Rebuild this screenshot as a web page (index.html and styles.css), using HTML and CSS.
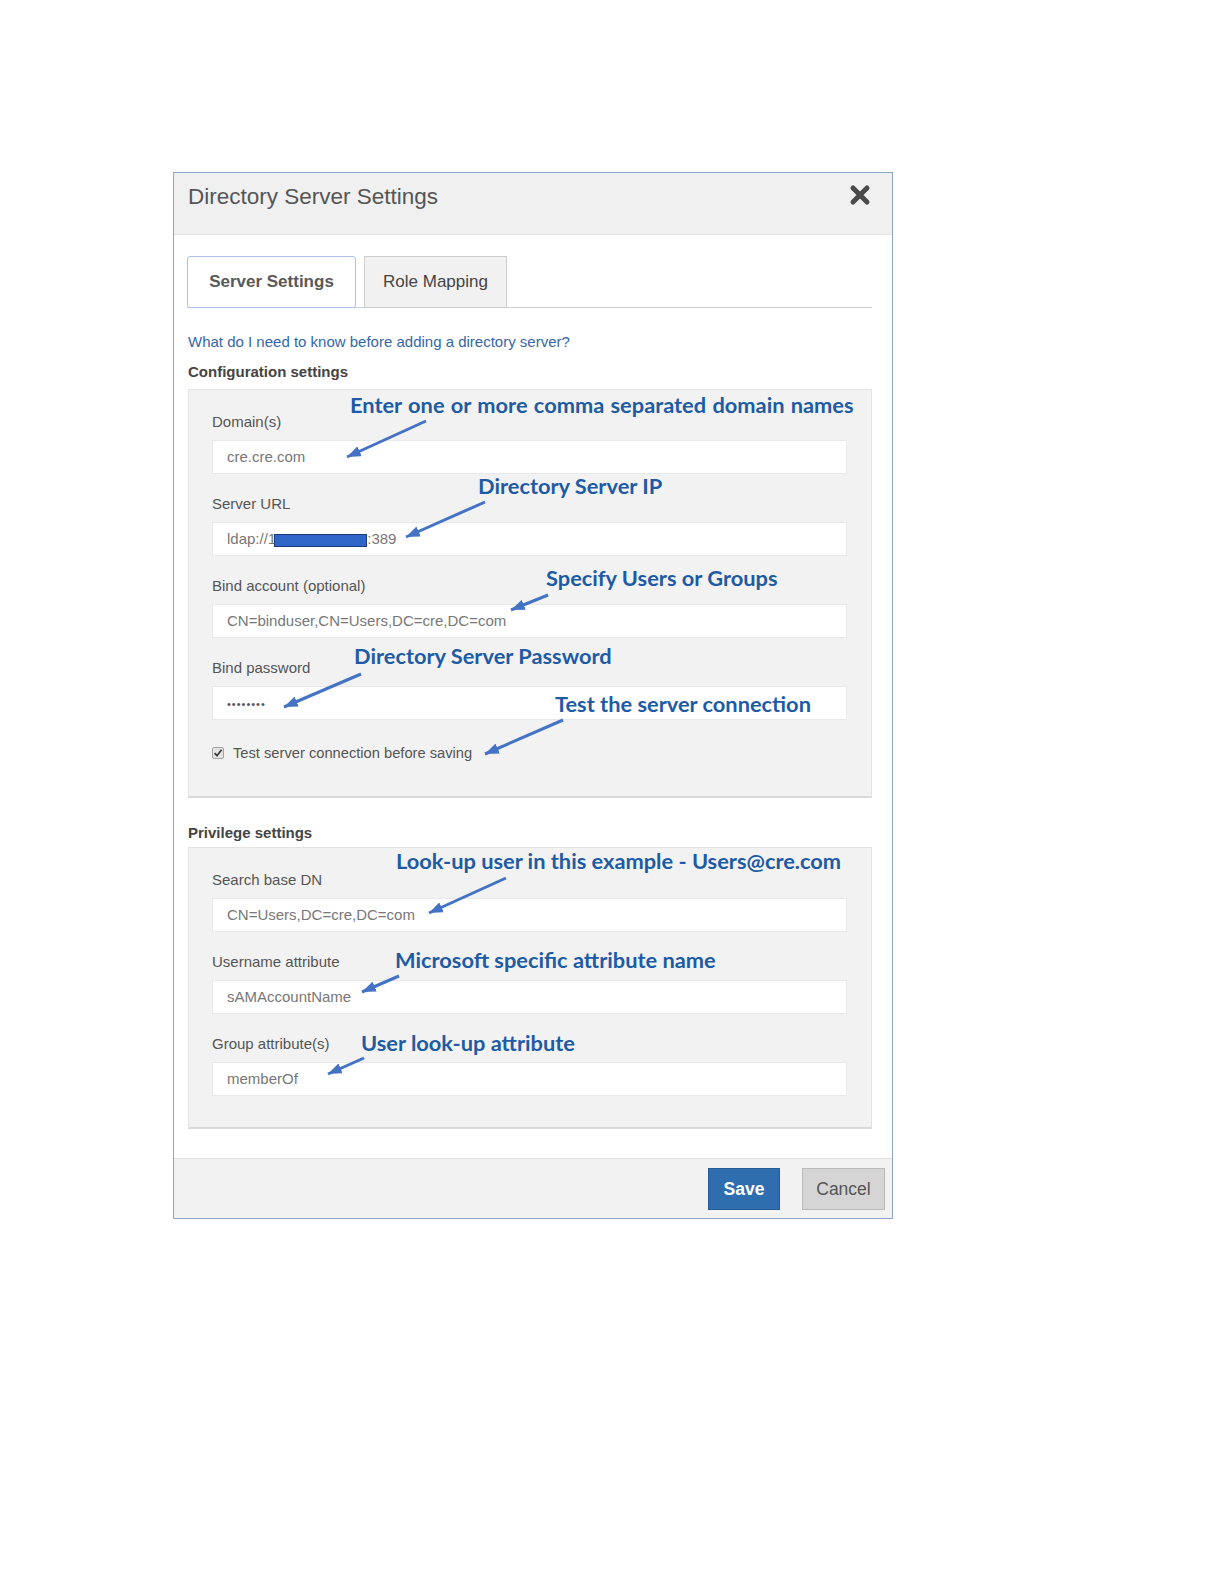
FILE: index.html
```html
<!DOCTYPE html>
<html>
<head>
	<meta charset="utf-8">
	<title>Directory Server Settings</title>
	<link rel="stylesheet" href="styles.css">
</head>
<body>
	<div id="page">
		<div class="dialog">
			<div class="dialog-header">
				<h1 class="dialog-title">Directory Server Settings</h1>
				<span class="close">
					<svg width="24" height="22" viewBox="0 0 24 22"><path d="M5 4 L19 18 M19 4 L5 18" stroke="#4a4a4a" stroke-width="5" stroke-linecap="round"/></svg>
				</span>
			</div>

			<div class="dialog-body">
				<ul class="tabs">
					<li class="tab active">Server Settings</li>
					<li class="tab">Role Mapping</li>
				</ul>

				<a class="help-link" href="#">What do I need to know before adding a directory server?</a>

				<p class="section-title">Configuration settings</p>
				<div class="panel">
					<div class="field">
						<label>Domain(s)</label>
						<div class="input">cre.cre.com</div>
					</div>
					<div class="field">
						<label>Server URL</label>
						<div class="input">ldap://1<span class="redacted"></span>:389</div>
					</div>
					<div class="field">
						<label>Bind account (optional)</label>
						<div class="input">CN=binduser,CN=Users,DC=cre,DC=com</div>
					</div>
					<div class="field">
						<label>Bind password</label>
						<div class="input"><span class="dots">••••••••</span></div>
					</div>
					<div class="check-row">
						<svg width="12" height="12" viewBox="0 0 12 12"><rect x="0.5" y="0.5" width="11" height="11" rx="1.5" fill="#e4e4e4" stroke="#a3a3a3"/><path d="M2.6 6.2 L5 8.7 L9.6 2.8" fill="none" stroke="#3d3d3d" stroke-width="1.8"/></svg>
						<span>Test server connection before saving</span>
					</div>
				</div>

				<p class="section-title privilege">Privilege settings</p>
				<div class="panel privilege">
					<div class="field">
						<label>Search base DN</label>
						<div class="input">CN=Users,DC=cre,DC=com</div>
					</div>
					<div class="field">
						<label>Username attribute</label>
						<div class="input">sAMAccountName</div>
					</div>
					<div class="field">
						<label>Group attribute(s)</label>
						<div class="input">memberOf</div>
					</div>
				</div>
			</div>

			<div class="dialog-footer">
				<button class="btn btn-save">Save</button>
				<button class="btn btn-cancel">Cancel</button>
			</div>
		</div><!-- dialog -->

		<!-- callouts drawn over the dialog -->
		<svg class="arrows" width="1224" height="1584">
			<defs>
				<marker id="head" markerWidth="4.6" markerHeight="3.6" refX="4.6" refY="1.8" orient="auto" markerUnits="strokeWidth">
					<path d="M0,0 L4.6,1.8 L0,3.6 z" fill="#4472c4"/>
				</marker>
			</defs>
			<g stroke="#4472c4" stroke-width="3" marker-end="url(#head)">
				<line x1="426" y1="421" x2="347" y2="457"/>
				<line x1="485" y1="502" x2="406" y2="537"/>
				<line x1="548" y1="595" x2="511" y2="610"/>
				<line x1="361" y1="674" x2="284" y2="707"/>
				<line x1="563" y1="720" x2="485" y2="754"/>
				<line x1="506" y1="878" x2="429" y2="913"/>
				<line x1="399" y1="976" x2="362" y2="992"/>
				<line x1="364" y1="1058" x2="328" y2="1074"/>
			</g>
		</svg>
		<div class="note note-domains">Enter one or more comma separated domain names</div>
		<div class="note note-ip">Directory Server IP</div>
		<div class="note note-users">Specify Users or Groups</div>
		<div class="note note-password">Directory Server Password</div>
		<div class="note note-test">Test the server connection</div>
		<div class="note note-lookup">Look-up user in this example - Users@cre.com</div>
		<div class="note note-ms">Microsoft specific attribute name</div>
		<div class="note note-group">User look-up attribute</div>
	</div><!-- page -->
</body>
</html>
```

FILE: styles.css
```css
body{
	margin: 0;
	background: #fff;
	font-family: "Liberation Sans", Arial, sans-serif;
	color: #555;
}
#page{
	position: relative;
	width: 1224px;
	min-height: 1584px;
	padding: 172px 0 0 173px;
	box-sizing: border-box;
}
.dialog{
	width: 720px;
	border: 1px solid #8ea6c6;
	box-sizing: border-box;
	background: #fff;
}
.dialog-header{
	display: flex;
	justify-content: space-between;
	align-items: flex-start;
	height: 62px;
	box-sizing: border-box;
	padding: 9px 20px 0 14px;
	background: #f0f0f0;
	border-bottom: 1px solid #e3e3e3;
}
.dialog-title{
	margin: 0;
	font-size: 22.5px;
	font-weight: normal;
	line-height: 30px;
	color: #555;
}
.close{
	margin-top: 2px;
	line-height: 0;
}
.dialog-body{
	padding: 21px 20px 29px 14px;
}
.tabs{
	display: flex;
	gap: 8px;
	margin: 0 0 0 -1px;
	padding: 0;
	list-style: none;
	border-bottom: 1px solid #d2d2d2;
}
.tab{
	width: 143px;
	height: 52px;
	margin-bottom: -1px;
	box-sizing: border-box;
	border: 1px solid #cdcdcd;
	background: #f1f1f1;
	font-size: 17px;
	line-height: 50px;
	text-align: center;
	color: #444;
}
.tab.active{
	width: 169px;
	background: #fff;
	border-color: #a9c2e6;
	border-radius: 3px;
	font-weight: bold;
	color: #595959;
}
.help-link{
	display: block;
	margin-top: 23px;
	font-size: 15px;
	line-height: 22px;
	color: #3567a6;
	text-decoration: none;
}
.section-title{
	margin: 8px 0 6px;
	font-size: 15px;
	font-weight: bold;
	line-height: 22px;
	color: #444;
}
.section-title.privilege{
	margin: 24px 0 3px;
}
.panel{
	padding: 22px 24px 33px 23px;
	background: #f2f2f2;
	border: 1px solid #e3e3e3;
	border-bottom: 2px solid #d9d9d9;
}
.panel.privilege{
	padding-bottom: 31px;
}
.field{
	margin-bottom: 20px;
}
.field:last-child{
	margin-bottom: 0;
}
.field label{
	display: block;
	margin-bottom: 8px;
	font-size: 15px;
	line-height: 20px;
	color: #555;
}
.input{
	height: 34px;
	padding: 0 14px;
	box-sizing: border-box;
	background: #fff;
	border: 1px solid #e8e8e8;
	font-size: 15px;
	line-height: 32px;
	color: #777;
	white-space: nowrap;
}
.redacted{
	display: inline-block;
	width: 91px;
	height: 11px;
	margin-left: -2px;
	background: #2f64c8;
	border: 1px solid #1d3d7a;
	vertical-align: middle;
}
.dots{
	font-size: 11px;
	letter-spacing: 1px;
	color: #555;
}
.check-row{
	display: flex;
	align-items: center;
	gap: 9px;
	margin-top: 23px;
	font-size: 14.7px;
	line-height: 20px;
	color: #555;
}
.dialog-footer{
	display: flex;
	justify-content: flex-end;
	gap: 22px;
	padding: 9px 7px 8px;
	background: #f2f2f2;
	border-top: 1px solid #dfdfdf;
}
.btn{
	height: 42px;
	padding: 0;
	font-family: inherit;
	font-size: 17.5px;
	cursor: pointer;
}
.btn-save{
	width: 72px;
	background: #2e6eaf;
	border: 1px solid #245c96;
	color: #fff;
	font-weight: bold;
}
.btn-cancel{
	width: 83px;
	background: #d5d5d5;
	border: 1px solid #b8b8b8;
	color: #555;
}

/* callouts */
.arrows{
	position: absolute;
	left: 0;
	top: 0;
	pointer-events: none;
}
.note{
	position: absolute;
	font-family: Lato, "Open Sans", sans-serif;
	font-weight: bold;
	font-size: 21.8px;
	line-height: 26px;
	color: #1d5ba4;
	white-space: nowrap;
}
.note-domains{ left: 350px; top: 392px; word-spacing: 1px; }
.note-ip{ left: 478px; top: 473px; }
.note-users{ left: 546px; top: 565px; }
.note-password{ left: 354px; top: 643px; }
.note-test{ left: 555px; top: 691px; }
.note-lookup{ left: 396px; top: 848px; }
.note-ms{ left: 395px; top: 947px; }
.note-group{ left: 361px; top: 1030px; }
```
